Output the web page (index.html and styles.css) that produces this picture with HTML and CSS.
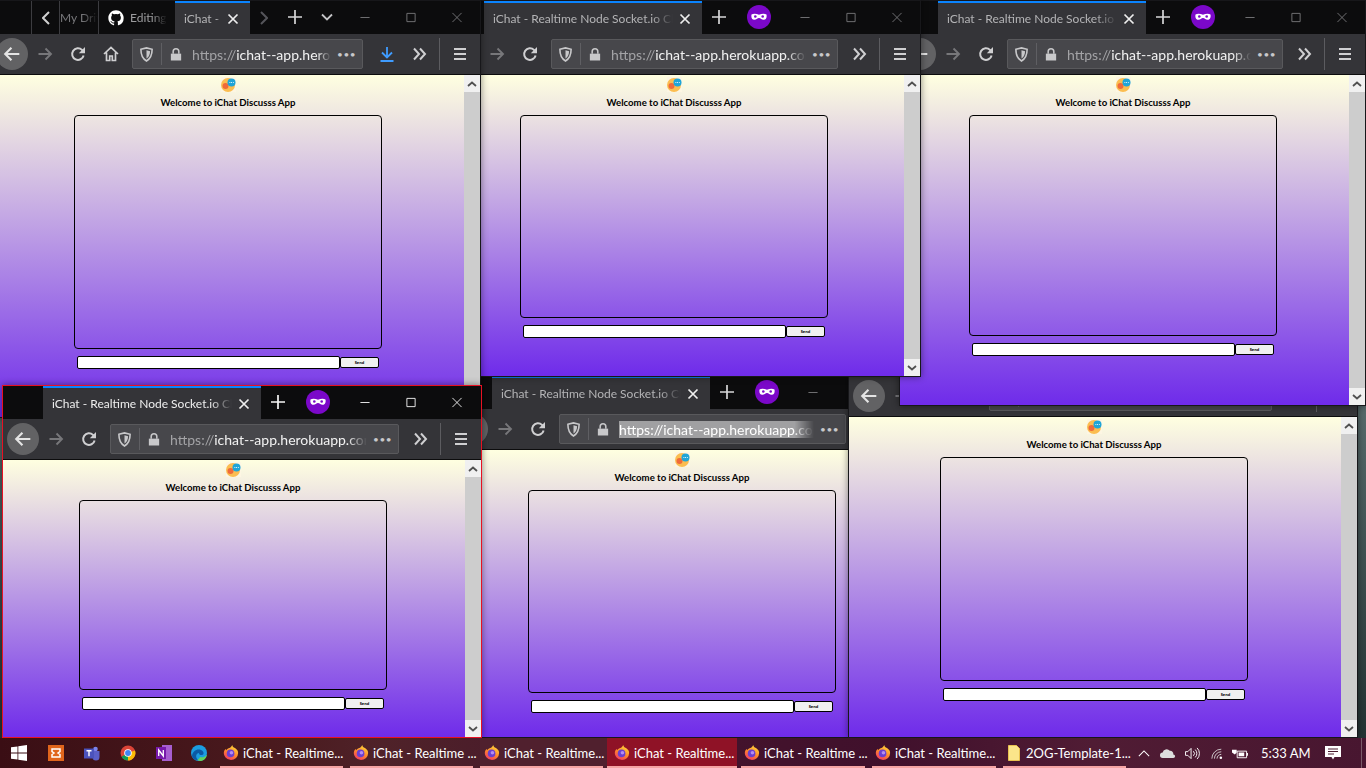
FILE: index.html
```html
<!DOCTYPE html>
<html lang="en">
<head>
  <meta charset="UTF-8" />
  <title>iChat windows</title>
  <link rel="stylesheet" href="styles.css">
</head>
<body>
  <svg class="sprites" width="0" height="0">
    <defs><linearGradient id="ff" x1="0.700" y1="0" x2="0.200" y2="1"><stop offset="0" stop-color="#ffd93a"/><stop offset=".5" stop-color="#ff8a2a"/><stop offset="1" stop-color="#ef2f6a"/></linearGradient></defs>
    <symbol id="i-back" viewBox="0 0 16 16"><path d="M14.500 8H2M7.500 2.500 2 8l5.500 5.500" fill="none" stroke="currentColor" stroke-width="1.900"/></symbol>
    <symbol id="i-reload" viewBox="0 0 16 16"><path d="M13.600 9.400A5.800 5.800 0 1 1 12 3.900L14 6" fill="none" stroke="currentColor" stroke-width="2"/><path d="M15 1v6.200H8.800z" fill="currentColor"/></symbol>
    <symbol id="i-home" viewBox="0 0 16 16"><path d="M1 8 8 1.500 15 8M3.500 6.500V14.500h3.200V10h2.600v4.500h3.200V6.500" fill="none" stroke="currentColor" stroke-width="1.700"/></symbol>
    <symbol id="i-shield" viewBox="0 0 16 16"><path d="M2 2.500 8 1l6 1.500c0 6-1.500 10-6 12.500C3.500 12.500 2 8.500 2 2.500z" fill="none" stroke="currentColor" stroke-width="1.700"/><path d="M8 3.500 11.800 4.500C11.700 8 10.700 10.500 8 12.300z" fill="currentColor"/></symbol>
    <symbol id="i-lock" viewBox="0 0 14 16"><path d="M1 7h12v8H1z" fill="currentColor"/><path d="M3.700 7V4.500a3.300 3.300 0 0 1 6.600 0V7" fill="none" stroke="currentColor" stroke-width="1.800"/></symbol>
    <symbol id="i-more" viewBox="0 0 16 16"><path d="M9 2.500 14 8l-5 5.500M3 2.500 8 8l-5 5.500" fill="none" stroke="currentColor" stroke-width="2"/></symbol>
    <symbol id="i-menu" viewBox="0 0 16 16"><path d="M2 3h12M2 8h12M2 13h12" stroke="currentColor" stroke-width="1.800"/></symbol>
    <symbol id="i-close" viewBox="0 0 12 12"><path d="M1.500 1.500l9 9M10.500 1.500l-9 9" stroke="currentColor" stroke-width="1.700"/></symbol>
    <symbol id="i-plus" viewBox="0 0 16 16"><path d="M8 1v14M1 8h14" stroke="currentColor" stroke-width="1.700"/></symbol>
    <symbol id="i-min" viewBox="0 0 12 12"><path d="M1 6h10" stroke="currentColor"/></symbol>
    <symbol id="i-max" viewBox="0 0 12 12"><path d="M1.500 1.500h9v9h-9z" fill="none" stroke="currentColor"/></symbol>
    <symbol id="i-x" viewBox="0 0 12 12"><path d="M1 1l10 10M11 1 1 11" stroke="currentColor"/></symbol>
    <symbol id="i-mask" viewBox="0 0 24 24"><circle cx="12" cy="12" r="12" fill="#7b08c9"/><path d="M4.500 9.500c2-1.200 5-.8 7.500.3 2.500-1.100 5.500-1.500 7.500-.3.500 2.500-.2 5.200-2.800 5.300-2 .1-3-1.800-4.700-1.800s-2.700 1.900-4.700 1.800C4.700 14.700 4 12 4.500 9.500z" fill="#fff"/><circle cx="8.300" cy="11.500" r="1.300" fill="#7b08c9"/><circle cx="15.700" cy="11.500" r="1.300" fill="#7b08c9"/></symbol>
    <symbol id="i-logo" viewBox="0 0 15 15"><path d="M0 0h15v15H0z" fill="#fdf6e3"/><circle cx="7" cy="8" r="7" fill="#fbbd50"/><circle cx="4.500" cy="9" r="3" fill="#ef6a3a"/><circle cx="10.500" cy="5.500" r="4" fill="#1fa5d8"/><path d="M8.500 5.500h.8M10.200 5.500h.8M11.900 5.500h.8" stroke="#fff"/></symbol>
    <symbol id="i-firefox" viewBox="0 0 18 18"><path d="M9 17A8 8 0 0 1 1.200 7C2 5.500 2.500 5 3 4.500l.5 1.500C4.500 4 7 3.500 8 3c1-.7 1.800-1.700 2.500-3 0 1.500 1 2.500 3 3.500C16 5.200 17 7 17 9a8 8 0 0 1-8 8z" fill="url(#ff)"/><circle cx="8.500" cy="9.500" r="4.300" fill="#6b3fd0"/><circle cx="9.500" cy="8.700" r="2" fill="#b58df0"/></symbol>
    <symbol id="i-github" viewBox="0 0 24 24"><path d="M12 .5C5.650.5.500 5.650.500 12c0 5.080 3.290 9.390 7.860 10.910.570.100.790-.250.790-.550v-2.140c-3.200.700-3.870-1.360-3.870-1.360-.520-1.330-1.280-1.680-1.280-1.680-1.040-.710.080-.700.080-.700 1.160.080 1.770 1.190 1.770 1.190 1.030 1.760 2.700 1.250 3.360.960.100-.750.400-1.250.730-1.540-2.550-.290-5.240-1.280-5.240-5.690 0-1.260.450-2.290 1.180-3.100-.120-.290-.510-1.460.110-3.050 0 0 .960-.310 3.150 1.180a10.900 10.900 0 0 1 5.740 0c2.190-1.490 3.150-1.180 3.150-1.180.620 1.590.230 2.760.110 3.050.740.810 1.180 1.840 1.180 3.100 0 4.420-2.690 5.390-5.250 5.680.410.360.780 1.060.780 2.140v3.170c0 .310.210.660.800.550A11.500 11.500 0 0 0 23.500 12C23.500 5.650 18.350.500 12 .500z" fill="currentColor"/></symbol>
    <symbol id="i-arrow-up" viewBox="0 0 10 6"><path d="M1 5l4-3.500L9 5" fill="none" stroke="#505050" stroke-width="1.800"/></symbol>
    <symbol id="i-arrow-down" viewBox="0 0 10 6"><path d="M1 1l4 3.500L9 1" fill="none" stroke="#505050" stroke-width="1.800"/></symbol>
  </svg>

  <div class="desktop">

    <!-- window 5, lowest in the stack -->
    <section class="win win-e">
      <div class="strip">
        <div class="tab"><span class="tab-title">iChat - Realtime Node Socket.io Chat App</span><svg class="tab-x"><use href="#i-close"/></svg></div>
        <svg class="new-tab"><use href="#i-plus"/></svg>
        <svg class="mask"><use href="#i-mask"/></svg>
        <div class="controls"><svg><use href="#i-min"/></svg><svg><use href="#i-max"/></svg><svg><use href="#i-x"/></svg></div>
      </div>
      <div class="toolbar">
        <span class="back"><svg><use href="#i-back"/></svg></span>
        <span class="tool dim"><svg><use href="#i-back"/></svg></span>
        <span class="tool"><svg><use href="#i-reload"/></svg></span>
        <div class="urlbar">
          <svg class="shield"><use href="#i-shield"/></svg><i class="url-sep"></i><svg class="lock"><use href="#i-lock"/></svg>
          <div class="url url-selected"><span class="url-sel">https://ichat--app.herokuapp.com/</span></div>
          <span class="dots">•••</span>
        </div>
        <span class="tool"><svg><use href="#i-more"/></svg></span><i class="sep"></i><span class="tool"><svg><use href="#i-menu"/></svg></span>
      </div>
      <div class="content">
        <div class="page">
          <svg class="logo"><use href="#i-logo"/></svg>
          <h1 class="title">Welcome to iChat Discusss App</h1>
          <div class="chat-box"></div>
          <div class="send-row"><input class="msg" type="text"><button class="send">Send</button></div>
        </div>
        <div class="scrollbar"><span class="sb-btn"><svg><use href="#i-arrow-up"/></svg></span><span class="thumb"></span><span class="sb-btn"><svg><use href="#i-arrow-down"/></svg></span></div>
      </div>
    </section>

    <section class="win win-f">
      <div class="strip">
        <div class="tab"><span class="tab-title">iChat - Realtime Node Socket.io Chat App</span><svg class="tab-x"><use href="#i-close"/></svg></div>
        <svg class="new-tab"><use href="#i-plus"/></svg>
        <svg class="mask"><use href="#i-mask"/></svg>
        <div class="controls"><svg><use href="#i-min"/></svg><svg><use href="#i-max"/></svg><svg><use href="#i-x"/></svg></div>
      </div>
      <div class="toolbar">
        <span class="back"><svg><use href="#i-back"/></svg></span>
        <span class="tool dim"><svg><use href="#i-back"/></svg></span>
        <span class="tool"><svg><use href="#i-reload"/></svg></span>
        <span class="tool"><svg><use href="#i-home"/></svg></span>
        <div class="urlbar">
          <svg class="shield"><use href="#i-shield"/></svg><i class="url-sep"></i><svg class="lock"><use href="#i-lock"/></svg>
          <div class="url"><span class="url-dim">https://</span>ichat--app.herokuapp.com/</div>
          <span class="dots">•••</span>
        </div>
        <span class="tool"><svg><use href="#i-more"/></svg></span><i class="sep"></i><span class="tool"><svg><use href="#i-menu"/></svg></span>
      </div>
      <div class="content">
        <div class="page">
          <svg class="logo"><use href="#i-logo"/></svg>
          <h1 class="title">Welcome to iChat Discusss App</h1>
          <div class="chat-box"></div>
          <div class="send-row"><input class="msg" type="text"><button class="send">Send</button></div>
        </div>
        <div class="scrollbar"><span class="sb-btn"><svg><use href="#i-arrow-up"/></svg></span><span class="thumb"></span><span class="sb-btn"><svg><use href="#i-arrow-down"/></svg></span></div>
      </div>
    </section>

    <section class="win win-c">
      <div class="strip">
        <div class="tab"><span class="tab-title">iChat - Realtime Node Socket.io Chat App</span><svg class="tab-x"><use href="#i-close"/></svg></div>
        <svg class="new-tab"><use href="#i-plus"/></svg>
        <svg class="mask"><use href="#i-mask"/></svg>
        <div class="controls"><svg><use href="#i-min"/></svg><svg><use href="#i-max"/></svg><svg><use href="#i-x"/></svg></div>
      </div>
      <div class="toolbar">
        <span class="back"><svg><use href="#i-back"/></svg></span>
        <span class="tool dim"><svg><use href="#i-back"/></svg></span>
        <span class="tool"><svg><use href="#i-reload"/></svg></span>
        <div class="urlbar">
          <svg class="shield"><use href="#i-shield"/></svg><i class="url-sep"></i><svg class="lock"><use href="#i-lock"/></svg>
          <div class="url"><span class="url-dim">https://</span>ichat--app.herokuapp.com/</div>
          <span class="dots">•••</span>
        </div>
        <span class="tool"><svg><use href="#i-more"/></svg></span><i class="sep"></i><span class="tool"><svg><use href="#i-menu"/></svg></span>
      </div>
      <div class="content">
        <div class="page">
          <svg class="logo"><use href="#i-logo"/></svg>
          <h1 class="title">Welcome to iChat Discusss App</h1>
          <div class="chat-box"></div>
          <div class="send-row"><input class="msg" type="text"><button class="send">Send</button></div>
        </div>
        <div class="scrollbar"><span class="sb-btn"><svg><use href="#i-arrow-up"/></svg></span><span class="thumb"></span><span class="sb-btn"><svg><use href="#i-arrow-down"/></svg></span></div>
      </div>
    </section>

    <section class="win win-b">
      <div class="strip">
        <div class="tab"><span class="tab-title">iChat - Realtime Node Socket.io Chat App</span><svg class="tab-x"><use href="#i-close"/></svg></div>
        <svg class="new-tab"><use href="#i-plus"/></svg>
        <svg class="mask"><use href="#i-mask"/></svg>
        <div class="controls"><svg><use href="#i-min"/></svg><svg><use href="#i-max"/></svg><svg><use href="#i-x"/></svg></div>
      </div>
      <div class="toolbar">
        <span class="back"><svg><use href="#i-back"/></svg></span>
        <span class="tool dim"><svg><use href="#i-back"/></svg></span>
        <span class="tool"><svg><use href="#i-reload"/></svg></span>
        <div class="urlbar">
          <svg class="shield"><use href="#i-shield"/></svg><i class="url-sep"></i><svg class="lock"><use href="#i-lock"/></svg>
          <div class="url"><span class="url-dim">https://</span>ichat--app.herokuapp.com/</div>
          <span class="dots">•••</span>
        </div>
        <span class="tool"><svg><use href="#i-more"/></svg></span><i class="sep"></i><span class="tool"><svg><use href="#i-menu"/></svg></span>
      </div>
      <div class="content">
        <div class="page">
          <svg class="logo"><use href="#i-logo"/></svg>
          <h1 class="title">Welcome to iChat Discusss App</h1>
          <div class="chat-box"></div>
          <div class="send-row"><input class="msg" type="text"><button class="send">Send</button></div>
        </div>
        <div class="scrollbar"><span class="sb-btn"><svg><use href="#i-arrow-up"/></svg></span><span class="thumb"></span><span class="sb-btn"><svg><use href="#i-arrow-down"/></svg></span></div>
      </div>
    </section>

    <!-- this one has several tabs open, so its strip is different -->
    <section class="win win-a">
      <div class="strip">
        <div class="mini-tabs">
          <span class="mini-nav"><svg viewBox="0 0 8 14"><path d="M7 1 1 7l6 6" fill="none" stroke="currentColor" stroke-width="2"/></svg></span>
          <span class="mini-tab mini-drive">My Drive</span>
          <span class="mini-tab mini-git"><svg class="gh"><use href="#i-github"/></svg><span class="mini-fade">Editing</span></span>
          <div class="tab"><span class="tab-title">iChat - Realtime</span><svg class="tab-x"><use href="#i-close"/></svg></div>
          <span class="mini-nav mini-off"><svg viewBox="0 0 8 14"><path d="M1 1l6 6-6 6" fill="none" stroke="currentColor" stroke-width="2"/></svg></span>
        </div>
        <svg class="new-tab"><use href="#i-plus"/></svg>
        <svg class="tab-list" viewBox="0 0 12 8"><path d="M1 1.500 6 6.500l5-5" fill="none" stroke="currentColor" stroke-width="1.800"/></svg>
        <div class="controls"><svg><use href="#i-min"/></svg><svg><use href="#i-max"/></svg><svg><use href="#i-x"/></svg></div>
      </div>
      <div class="toolbar">
        <span class="back"><svg><use href="#i-back"/></svg></span>
        <span class="tool dim"><svg><use href="#i-back"/></svg></span>
        <span class="tool"><svg><use href="#i-reload"/></svg></span>
        <span class="tool"><svg><use href="#i-home"/></svg></span>
        <div class="urlbar">
          <svg class="shield"><use href="#i-shield"/></svg><i class="url-sep"></i><svg class="lock"><use href="#i-lock"/></svg>
          <div class="url"><span class="url-dim">https://</span>ichat--app.herokuapp.com/</div>
          <span class="dots">•••</span>
        </div>
        <span class="tool download"><svg viewBox="0 0 16 16"><path d="M8 1v10M3 6.500 8 11.500l5-5M1.500 15h13" fill="none" stroke="currentColor" stroke-width="1.800"/></svg></span>
        <span class="tool"><svg><use href="#i-more"/></svg></span><i class="sep"></i><span class="tool"><svg><use href="#i-menu"/></svg></span>
      </div>
      <div class="content">
        <div class="page">
          <svg class="logo"><use href="#i-logo"/></svg>
          <h1 class="title">Welcome to iChat Discusss App</h1>
          <div class="chat-box"></div>
          <div class="send-row"><input class="msg" type="text"><button class="send">Send</button></div>
        </div>
        <div class="scrollbar"><span class="sb-btn"><svg><use href="#i-arrow-up"/></svg></span><span class="thumb"></span><span class="sb-btn"><svg><use href="#i-arrow-down"/></svg></span></div>
      </div>
    </section>

    <!-- focused window, red border -->
    <section class="win win-d">
      <div class="strip">
        <div class="tab"><span class="tab-title">iChat - Realtime Node Socket.io Chat App</span><svg class="tab-x"><use href="#i-close"/></svg></div>
        <svg class="new-tab"><use href="#i-plus"/></svg>
        <svg class="mask"><use href="#i-mask"/></svg>
        <div class="controls"><svg><use href="#i-min"/></svg><svg><use href="#i-max"/></svg><svg><use href="#i-x"/></svg></div>
      </div>
      <div class="toolbar">
        <span class="back"><svg><use href="#i-back"/></svg></span>
        <span class="tool dim"><svg><use href="#i-back"/></svg></span>
        <span class="tool"><svg><use href="#i-reload"/></svg></span>
        <div class="urlbar">
          <svg class="shield"><use href="#i-shield"/></svg><i class="url-sep"></i><svg class="lock"><use href="#i-lock"/></svg>
          <div class="url"><span class="url-dim">https://</span>ichat--app.herokuapp.com/</div>
          <span class="dots">•••</span>
        </div>
        <span class="tool"><svg><use href="#i-more"/></svg></span><i class="sep"></i><span class="tool"><svg><use href="#i-menu"/></svg></span>
      </div>
      <div class="content">
        <div class="page">
          <svg class="logo"><use href="#i-logo"/></svg>
          <h1 class="title">Welcome to iChat Discusss App</h1>
          <div class="chat-box"></div>
          <div class="send-row"><input class="msg" type="text"><button class="send">Send</button></div>
        </div>
        <div class="scrollbar"><span class="sb-btn"><svg><use href="#i-arrow-up"/></svg></span><span class="thumb"></span><span class="sb-btn"><svg><use href="#i-arrow-down"/></svg></span></div>
      </div>
    </section>
  </div>

  <footer class="taskbar">
    <span class="start"><svg viewBox="0 0 16 16"><path d="M0 2.300 6.500 1.400v6.200H0zM7.300 1.300 16 0v7.600H7.300zM0 8.400h6.500v6.200L0 13.700zM7.300 8.400H16V16l-8.700-1.300z" fill="#fff"/></svg></span>
    <span class="pin"><svg viewBox="0 0 16 16"><path d="M0 0h16v16H0z" fill="#e0651c"/><path d="M4 4h8v2.500l-2 1.500 2 1.500V12H4V9.500L6 8 4 6.500z" fill="none" stroke="#fff" stroke-width="1.500"/></svg></span>
    <span class="pin"><svg viewBox="0 0 16 16"><circle cx="11.500" cy="4" r="2.300" fill="#7b83eb"/><path d="M8 6h7.500v6a3.500 3.500 0 0 1-7 0z" fill="#5b5fc7"/><path d="M0 3.500h10v10H0z" fill="#4b53bc"/><path d="M2.500 5.800h5M5 5.800v5.500" stroke="#fff" stroke-width="1.400"/></svg></span>
    <span class="pin"><svg viewBox="0 0 16 16"><circle cx="8" cy="8" r="7.500" fill="#db4437"/><path d="M8 8 1.500 11.800A7.500 7.500 0 0 0 8 15.500z" fill="#0f9d58"/><path d="M8 8V15.500A7.500 7.500 0 0 0 15 5.500z" fill="#fbbc05"/><circle cx="8" cy="8" r="3.800" fill="#fff"/><circle cx="8" cy="8" r="2.900" fill="#4285f4"/></svg></span>
    <span class="pin"><svg viewBox="0 0 16 16"><path d="M6 0h10v16H6z" fill="#a75ed0"/><path d="M0 2h10v12H0z" fill="#7719aa"/><path d="M2.700 11V5l4.600 6V5" fill="none" stroke="#fff" stroke-width="1.300"/></svg></span>
    <span class="pin pin-edge"><svg viewBox="0 0 16 16"><circle cx="8" cy="8" r="8" fill="#1b9de2"/><path d="M1 11C1.500 6 6 3.500 10 5c3 1.200 3.500 4.500 1 5-2 .3-3-.5-3-2C5 8 4 12 7 15 4 15.500 1.500 14 1 11z" fill="#0c59a4"/><path d="M9 12c2 .8 5 .3 7-2.500C15.500 13 13 15.500 10 16c-2 .2-3-.8-3.500-1.500C7.500 14.500 8.500 13.500 9 12z" fill="#5fd35f"/></svg></span>
    <div class="task task-1"><svg><use href="#i-firefox"/></svg>iChat - Realtime...</div>
    <div class="task task-2"><svg><use href="#i-firefox"/></svg>iChat - Realtime ...</div>
    <div class="task task-3"><svg><use href="#i-firefox"/></svg>iChat - Realtime...</div>
    <div class="task task-4"><svg><use href="#i-firefox"/></svg>iChat - Realtime...</div>
    <div class="task task-5"><svg><use href="#i-firefox"/></svg>iChat - Realtime ...</div>
    <div class="task task-6"><svg><use href="#i-firefox"/></svg>iChat - Realtime...</div>
    <div class="task task-7"><svg class="folder" viewBox="0 0 12 16"><path d="M.5.500h8l3 3v12H.5z" fill="#fbe58a" stroke="#e8c250"/></svg>2OG-Template-1...</div>
    <div class="tray">
      <svg class="tray-up" viewBox="0 0 14 8"><path d="M1 7l6-6 6 6" fill="none" stroke="#fff" stroke-width="1.200"/></svg>
      <svg class="tray-cloud" viewBox="0 0 18 10"><path d="M3 10a3 3 0 0 1 0-6 4.500 4.500 0 0 1 8-2 3.500 3.500 0 0 1 4 4 2 2 0 0 1 0 4z" fill="#ddd"/></svg>
      <svg class="tray-sound" viewBox="0 0 16 14"><path d="M1 5h2.500L7 1.500v11L3.500 9H1z" fill="none" stroke="#fff"/><path d="M9.500 4.500a3.500 3.500 0 0 1 0 5M11.500 2.800a6 6 0 0 1 0 8.400M13.500 1a8.500 8.500 0 0 1 0 12" fill="none" stroke="#fff"/></svg>
      <svg class="tray-wifi" viewBox="0 0 14 14"><path d="M1 13a11 11 0 0 1 11-11M4 13a8 8 0 0 1 8-8M7 13a5 5 0 0 1 5-5" fill="none" stroke="#ddd"/><circle cx="11.500" cy="12" r="1.500" fill="#fff"/></svg>
      <svg class="tray-power" viewBox="0 0 17 12"><path d="M5.500 3.500h10v7h-10z" fill="none" stroke="#fff"/><path d="M7 5h6v4H7zM16 5.500h1v3h-1zM0 2h5v3l-2 2-3-2zM1 0v2M4 0v2M2.500 7v3" fill="#fff"/></svg>
    </div>
    <time class="clock">5:33 AM</time>
    <span class="notify"><svg viewBox="0 0 16 16"><path d="M0 1h16v11H9.500L8 14.500 6.500 12H0z" fill="#fff"/><path d="M3 4h10M3 6.500h10M3 9h6" stroke="#4a1a2e"/></svg></span>
    <i class="show-desktop"></i>
  </footer>
</body>
</html>
```

FILE: styles.css
```css
* {
  margin: 0;
  padding: 0;
  box-sizing: border-box;
}

html, body {
  height: 100%;
  overflow: hidden;
}

body {
  display: flex;
  flex-direction: column;
  font-family: Lato, "Noto Sans", sans-serif;
  background: linear-gradient(#5a6e6f 50%, #1f2e2e 100%);
}

.sprites {
  position: absolute;
  width: 0;
  height: 0;
}

.desktop {
  flex: 1;
  position: relative;
  overflow: hidden;
}

/* windows sit on a free canvas, each one placed by its own rule below */
.win {
  position: absolute;
  display: flex;
  flex-direction: column;
  border: 1px solid #17171a;
  background: #0c0c0d;
  box-shadow: 0 0 7px rgba(0, 0, 0, 0.45);
  overflow: hidden;
}

.win-e { left: 451px; top: 375px; width: 478px; height: 363px; z-index: 1; }
.win-f { left: 848px; top: 342px; width: 510px; height: 396px; z-index: 2; }
.win-c { left: 899px; top: 0; width: 467px; height: 406px; z-index: 3; }
.win-b { left: 443px; top: 0; width: 478px; height: 377px; z-index: 4; }
.win-a { left: -9px; top: 0; width: 490px; height: 418px; z-index: 5; }
.win-d { left: 2px; top: 385px; width: 480px; height: 353px; z-index: 6; border-color: #e81123; }

.win-e .chat-box { height: 203px; }
.win-f .chat-box { height: 224px; }
.win-c .chat-box { height: 221px; }
.win-b .chat-box { height: 203px; }
.win-a .chat-box { height: 234px; }
.win-d .chat-box { height: 190px; }

.win-c .page { padding-right: 3px; }
.win-d .page, .win-f .page { padding-right: 2px; }

/* tab strip */
.strip {
  height: 33px;
  flex: none;
  display: flex;
  align-items: stretch;
  padding-left: 40px;
  color: #d6d6d8;
  background: #0c0c0d;
}

.win-c .strip { padding-left: 38px; }

.tab {
  width: 218px;
  flex: none;
  display: flex;
  align-items: center;
  padding: 0 11px 0 9px;
  border-top: 2px solid #0a84ff;
  background: #343438;
  color: #b4b4b6;
  font-size: 12px;
}

.win-c .tab { width: 208px; }
.win-d .tab { color: #eee; }
.win-d .strip { color: #f6f6f6; }

.tab-title {
  flex: 1;
  white-space: nowrap;
  overflow: hidden;
  -webkit-mask-image: linear-gradient(to right, #000 88%, transparent);
  mask-image: linear-gradient(to right, #000 88%, transparent);
}

.tab-x {
  width: 12px;
  height: 12px;
  color: #eee;
  margin-left: 6px;
}

.new-tab {
  width: 16px;
  height: 16px;
  margin: 8px 0 0 9px;
}

.mask {
  width: 24px;
  height: 24px;
  margin: 4px 0 0 20px;
}

.controls {
  margin-left: auto;
  display: flex;
  align-items: center;
  color: #77777a;
}

.win-d .controls { color: #f4f4f4; padding-right: 1px; }

.controls svg {
  width: 46px;
  height: 11px;
  margin-top: -1px;
}

/* window with many tabs */
.win-a .strip { padding-left: 39px; }

.mini-tabs {
  display: flex;
  align-items: stretch;
}

.mini-nav {
  width: 28px;
  display: flex;
  align-items: center;
  justify-content: center;
  color: #d0d0d0;
  border-left: 1px solid #3c3c40;
}

.mini-nav svg {
  width: 8px;
  height: 14px;
}

.mini-off { border-left: 0; color: #55555a; }

.mini-tab {
  display: flex;
  align-items: center;
  color: #77777a;
  font-size: 12px;
  white-space: nowrap;
  overflow: hidden;
  border-left: 1px solid #3c3c40;
}

.mini-drive {
  width: 39px;
  -webkit-mask-image: linear-gradient(to right, #000 60%, transparent);
  mask-image: linear-gradient(to right, #000 60%, transparent);
}

.mini-git {
  width: 77px;
  padding-left: 9px;
  color: #9c9c9e;
}

.mini-fade {
  overflow: hidden;
  -webkit-mask-image: linear-gradient(to right, #000 60%, transparent);
  mask-image: linear-gradient(to right, #000 60%, transparent);
}

.gh {
  width: 16px;
  height: 16px;
  flex: none;
  margin-right: 6px;
  color: #fff;
}

.win-a .tab { width: 75px; }
.win-a .new-tab { margin-left: 9px; }

.tab-list {
  width: 12px;
  height: 8px;
  margin: 12px 0 0 18px;
  color: #c4c4c6;
}

/* nav toolbar */
.toolbar {
  height: 40px;
  flex: none;
  display: flex;
  align-items: center;
  padding: 0 4px;
  background: #343438;
  color: #cfcfd1;
}

.back {
  width: 32px;
  height: 32px;
  flex: none;
  display: flex;
  align-items: center;
  justify-content: center;
  border-radius: 50%;
  background: #626264;
  margin-right: 1px;
  color: #e4e4e4;
}

.back svg, .tool svg {
  width: 16px;
  height: 16px;
}

.back svg { width: 18px; height: 18px; }

.tool {
  width: 32px;
  height: 32px;
  flex: none;
  display: flex;
  align-items: center;
  justify-content: center;
  margin-right: 1px;
}

.tool:last-child { margin-right: 0; }

.dim { color: #77777a; }
.dim svg { transform: scaleX(-1); }

.download {
  color: #3f9cff;
  margin-left: 3px;
  margin-right: 0;
}

.urlbar {
  flex: 1;
  min-width: 0;
  height: 30px;
  margin: 0 5px 0 4px;
  display: flex;
  align-items: center;
  background: #47474b;
  border: 1px solid #59595c;
  border-radius: 2px;
  padding: 0 6px;
  color: #c8c8ca;
}

.win-f .urlbar { margin-right: 8px; }

.shield {
  width: 15px;
  height: 15px;
  flex: none;
}

.url-sep {
  width: 1px;
  height: 22px;
  flex: none;
  margin-left: 7px;
  background: #5f5f63;
}

.lock {
  width: 12px;
  height: 15px;
  flex: none;
  margin: 0 10px 0 8px;
}

.url {
  flex: 1;
  min-width: 0;
  font-size: 14px;
  color: #f2f2f2;
  white-space: nowrap;
  overflow: hidden;
  -webkit-mask-image: linear-gradient(to right, #000 90%, transparent);
  mask-image: linear-gradient(to right, #000 90%, transparent);
}

.url-dim { color: #a3a3a6; }

.url-sel {
  background: #a0a0a2;
  color: #fff;
}

.dots {
  flex: none;
  font-size: 10px;
  letter-spacing: 0.5px;
  margin-left: 6px;
  color: #c8c8ca;
}

.sep {
  width: 1px;
  height: 32px;
  flex: none;
  margin: 0 4px 0 3px;
  background: #5c5c60;
}

/* page inside the window */
.content {
  flex: 1;
  min-height: 0;
  display: flex;
  border-top: 1px solid #0c0c0d;
  background: #fff;
}

.page {
  flex: 1;
  min-width: 0;
  display: flex;
  flex-direction: column;
  align-items: center;
  background: linear-gradient(#ffffe0, #6f2bea);
}

.logo {
  width: 15px;
  height: 15px;
  flex: none;
  margin-top: 2px;
}

.title {
  font-family: Lato, "Open Sans", sans-serif;
  font-size: 9.600px;
  font-weight: 700;
  line-height: 15px;
  color: #000;
  margin: 3px 0 5px;
}

.chat-box {
  width: 308px;
  flex: none;
  border: 1px solid #000;
  border-radius: 4px;
}

.send-row {
  width: 302px;
  display: flex;
  align-items: center;
  margin-top: 7px;
}

.msg {
  width: 263px;
  height: 13px;
  flex: none;
  background: #fff;
  border: 1px solid #000;
  border-radius: 2px;
}

.send {
  width: 39px;
  height: 11px;
  flex: none;
  background: #f0f0f0;
  border: 1px solid #000;
  border-radius: 2px;
  font-family: "Open Sans", sans-serif;
  font-size: 4px;
  font-weight: 700;
  line-height: 8px;
}

.scrollbar {
  width: 16px;
  flex: none;
  display: flex;
  flex-direction: column;
  background: #f0f0f0;
}

.sb-btn {
  height: 17px;
  flex: none;
  display: flex;
  align-items: center;
  justify-content: center;
}

.sb-btn svg {
  width: 10px;
  height: 6px;
}

.thumb {
  flex: 1;
  background: #cdcdcd;
}

/* taskbar */
.taskbar {
  height: 30px;
  flex: none;
  display: flex;
  align-items: center;
  color: #fff;
  font-size: 13px;
  background: linear-gradient(to right, #3a0e14 0%, #4a1a1e 20%, #4f2229 28%, #44142c 50%, #40102c 65%, #501c34 80%, #481630 100%);
}

.start {
  width: 38px;
  flex: none;
  display: flex;
  justify-content: center;
}

.start svg, .pin svg {
  width: 16px;
  height: 16px;
}

.pin {
  width: 36px;
  flex: none;
  display: flex;
  justify-content: center;
}

.pin-edge { width: 34px; }

.task {
  height: 30px;
  flex: none;
  display: flex;
  align-items: center;
  position: relative;
  white-space: nowrap;
  padding-left: 3px;
}

.task svg {
  width: 16px;
  height: 16px;
  flex: none;
  margin-right: 4px;
}

.task::after {
  content: '';
  position: absolute;
  left: 0;
  right: 7px;
  bottom: 0;
  height: 2px;
  background: #f5a3a3;
}

.task-1 { width: 130px; margin-left: 4px; }
.task-2 { width: 130px; }
.task-3 { width: 127px; padding-left: 4px; background: #50202e; }
.task-4 { width: 130px; margin-right: 4px; padding-left: 7px; background: #8f1226; }
.task-5 { width: 131px; }
.task-6 { width: 131px; }
.task-7 { width: 130px; padding-left: 5px; }

.task-3::after { right: 4px; }
.task-4::after { right: 0; }

.task .folder {
  width: 12px;
  height: 16px;
  margin-right: 6px;
}

.tray {
  display: flex;
  align-items: center;
  margin-left: 5px;
}

.tray svg {
  height: 13px;
  flex: none;
}

.tray-up { width: 12px; }
.tray-cloud { width: 16px; margin-left: 10px; }
.tray-sound { width: 16px; margin-left: 8px; }
.tray-wifi { width: 12px; margin-left: 11px; }
.tray-power { width: 16px; margin-left: 9px; }

.clock {
  flex: none;
  width: 44px;
  white-space: nowrap;
  margin-left: 13px;
}

.notify {
  flex: none;
  margin-left: 20px;
  display: flex;
}

.notify svg {
  width: 16px;
  height: 16px;
}

.show-desktop {
  width: 1px;
  height: 30px;
  flex: none;
  margin-left: 20px;
  background: #7a5a68;
}
```
